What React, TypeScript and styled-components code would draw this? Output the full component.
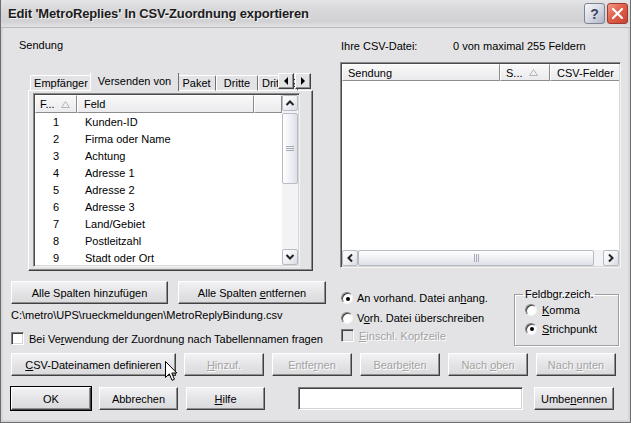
import React from 'react';
import styled, { createGlobalStyle } from 'styled-components';

const FONT = `"Liberation Sans", Arial, sans-serif`;

const GlobalStyle = createGlobalStyle`
  html, body { margin: 0; padding: 0; background: #e3e3e5; }
  body { font-family: ${FONT}; font-size: 11px; color: #000; }
  * { box-sizing: border-box; }
`;

const Window = styled.div`
  position: relative;
  width: 631px;
  height: 423px;
  display: flex;
  flex-direction: column;
  background: #d6d6d8;
  border: 1px solid #6d6d70;
  border-top: none;
  overflow: hidden;
`;

const TitleBar = styled.div`
  height: 28px;
  flex: none;
  display: flex;
  align-items: center;
  padding: 0 2px 0 7px;
  background: linear-gradient(#e4e4e6 0%, #d8d8da 35%, #d2d2d4 80%, #e2e2e4 100%);
  border-bottom: 1px solid #b8b8ba;
`;

const Title = styled.div`
  flex: 1;
  font-family: ${FONT};
  font-weight: bold;
  font-size: 13px;
  letter-spacing: -0.15px;
  color: #1c1c1c;
  text-shadow: 1px 1px 0 #f4f4f4;
  white-space: nowrap;
`;

const CaptionButtons = styled.div`
  display: flex;
  gap: 2px;
`;

const CaptionBtn = styled.div<{ $kind: 'help' | 'close' }>`
  width: 21px;
  height: 21px;
  border-radius: 3px;
  display: flex;
  align-items: center;
  justify-content: center;
  border: 1px solid ${p => (p.$kind === 'close' ? '#9a3a30' : '#7e8494')};
  background: ${p =>
    p.$kind === 'close'
      ? 'linear-gradient(135deg, #f29a88 0%, #e0604c 45%, #c8432f 100%)'
      : 'linear-gradient(135deg, #f6f7fa 0%, #d4d8e2 55%, #aeb4c4 100%)'};
  color: #3b4660;
  font-weight: bold;
  font-size: 14px;
  font-family: ${FONT};
`;

const Client = styled.div`
  flex: 1;
  margin: 0 2px 2px;
  background: #e3e3e5;
  padding: 0 0 0 8px;
  display: flex;
  flex-direction: column;
`;

const TopSection = styled.div`
  display: flex;
  align-items: flex-start;
`;

const LeftCol = styled.div`
  width: 322px;
  display: flex;
  flex-direction: column;
`;

const RightCol = styled.div`
  width: 281px;
  margin-left: 7px;
  display: flex;
  flex-direction: column;
`;

const SectionLabel = styled.div`
  margin: 10px 0 0 8px;
  line-height: 14px;
`;

const TabControl = styled.div`
  margin: 21px 0 0 17px;
  width: 285px;
  display: flex;
  flex-direction: column;
`;

const TabStrip = styled.div`
  position: relative;
  height: 18px;
  display: flex;
  align-items: flex-end;
  padding-left: 2px;
  overflow: hidden;
  z-index: 1;
  margin-bottom: -1px;
`;

const Tab = styled.div<{ $w: number; $active?: boolean; $clipped?: boolean }>`
  flex: none;
  width: ${p => p.$w + (p.$active ? 4 : 0)}px;
  height: ${p => (p.$active ? 19 : 16)}px;
  margin: 0 ${p => (p.$active ? -2 : 0)}px;
  position: relative;
  z-index: ${p => (p.$active ? 2 : 1)};
  display: flex;
  align-items: center;
  justify-content: ${p => (p.$clipped ? 'flex-start' : 'center')};
  padding-left: ${p => (p.$clipped ? 3 : 0)}px;
  line-height: 14px;
  padding-bottom: ${p => (p.$active ? 3 : 0)}px;
  background: #e3e3e5;
  border-top: 1px solid #ffffff;
  border-left: 1px solid #ffffff;
  border-right: 1px solid #707070;
  border-bottom: ${p => (p.$active ? 'none' : '1px solid #ffffff')};
  border-radius: 2px 2px 0 0;
  white-space: nowrap;
  overflow: hidden;
`;

const TabArrows = styled.div`
  position: absolute;
  right: 2px;
  top: 0;
  display: flex;
  gap: 1px;
  z-index: 3;
`;

const TabArrow = styled.div`
  width: 16px;
  height: 16px;
  display: flex;
  align-items: center;
  justify-content: center;
  background: #e3e3e5;
  border: 1px solid;
  border-color: #ffffff #404040 #404040 #ffffff;
  box-shadow: inset -1px -1px 0 #909090;
`;

const TabPanel = styled.div`
  height: 181px;
  background: #e3e3e5;
  border: 1px solid;
  border-color: #ffffff #404040 #404040 #ffffff;
  box-shadow: inset -1px -1px 0 #8c8c8c;
  padding: 2px 0 0 4px;
`;

const ListBox = styled.div<{ $w: number; $h: number }>`
  width: ${p => p.$w}px;
  height: ${p => p.$h}px;
  background: #ffffff;
  border: 1px solid;
  border-color: #8a8a8a #f4f4f4 #f4f4f4 #8a8a8a;
  box-shadow: inset 1px 1px 0 #4a4a4a, inset -1px -1px 0 #d6d6d6;
  padding: 1px;
  display: flex;
  overflow: hidden;
`;

const ListMain = styled.div`
  flex: 1;
  display: flex;
  flex-direction: column;
  overflow: hidden;
`;

const HeaderRow = styled.div<{ $h: number }>`
  display: flex;
  height: ${p => p.$h}px;
  flex: none;
`;

const HeaderCell = styled.div<{ $w: number; $pad?: number }>`
  width: ${p => p.$w}px;
  flex: none;
  display: flex;
  align-items: center;
  gap: 6px;
  padding-left: ${p => p.$pad ?? 5}px;
  background: linear-gradient(#f8f8f9, #ebebed);
  border-top: 1px solid #ffffff;
  border-left: 1px solid #ffffff;
  border-right: 1px solid #8c8c8c;
  border-bottom: 1px solid #8c8c8c;
  line-height: 14px;
  white-space: nowrap;
  overflow: hidden;
`;

const DataRow = styled.div`
  display: flex;
  height: 17px;
  flex: none;
  align-items: center;
  line-height: 14px;
`;

const NumCell = styled.div`
  width: 42px;
  text-align: center;
`;

const FieldCell = styled.div`
  padding-left: 8px;
`;

const VScroll = styled.div`
  width: 16px;
  flex: none;
  display: flex;
  flex-direction: column;
  background: #f3f3f5;
`;

const HScroll = styled.div`
  height: 16px;
  flex: none;
  display: flex;
  background: #f3f3f5;
  margin-top: auto;
`;

const SBtn = styled.div`
  width: 16px;
  height: 16px;
  flex: none;
  border: 1px solid #b9bbc4;
  border-radius: 2px;
  background: linear-gradient(135deg, #ffffff 0%, #eef0f4 55%, #d8dbe2 100%);
  display: flex;
  align-items: center;
  justify-content: center;
`;

const Thumb = styled.div<{ $vertical?: boolean; $len: number }>`
  ${p => (p.$vertical ? `height: ${p.$len}px; margin-top: 2px;` : `width: ${p.$len}px;`)}
  flex: none;
  border: 1px solid #b9bbc4;
  border-radius: 2px;
  background: ${p =>
    p.$vertical
      ? 'linear-gradient(90deg, #ffffff, #eceef2 60%, #dcdfe6)'
      : 'linear-gradient(#ffffff, #eceef2 60%, #dcdfe6)'};
  display: flex;
  align-items: center;
  justify-content: center;
`;

const Spacer = styled.div`
  flex: 1;
`;

const TopButtons = styled.div`
  margin-top: 10px;
  display: flex;
  gap: 10px;
`;

const Btn = styled.button<{ $w: number; $default?: boolean }>`
  width: ${p => p.$w}px;
  height: 23px;
  flex: none;
  padding: 0;
  font-family: ${FONT};
  font-size: 11px;
  color: #000;
  background: linear-gradient(#f2f2f4, #e3e3e5 55%, #dadadc);
  border: 1px solid;
  border-color: #ffffff #404040 #404040 #ffffff;
  box-shadow: inset -1px -1px 0 #8e8e8e;
  outline: ${p => (p.$default ? '1px solid #000' : 'none')};
  outline-offset: 0;
  cursor: default;
  &:disabled {
    color: #a2a2a2;
    text-shadow: 1px 1px 0 #ffffff;
  }
`;

const PathText = styled.div`
  margin-top: 4px;
  line-height: 14px;
  white-space: nowrap;
`;

const CheckRow = styled.div<{ $disabled?: boolean }>`
  display: flex;
  align-items: center;
  height: 15px;
  gap: 5px;
  color: ${p => (p.$disabled ? '#a2a2a2' : '#000')};
  text-shadow: ${p => (p.$disabled ? '1px 1px 0 #fff' : 'none')};
  white-space: nowrap;
`;

const LeftCheckRow = styled(CheckRow)`
  margin-top: 9px;
`;

const CheckBox = styled.span<{ $disabled?: boolean }>`
  width: 13px;
  height: 13px;
  flex: none;
  background: ${p => (p.$disabled ? '#e3e3e5' : '#ffffff')};
  border: 1px solid;
  border-color: #808080 #ffffff #ffffff #808080;
  box-shadow: inset 1px 1px 0 #404040, inset -1px -1px 0 #d4d4d4;
`;

const Radio = styled.span<{ $on?: boolean }>`
  width: 12px;
  height: 12px;
  flex: none;
  border-radius: 50%;
  background: #ffffff;
  border: 1px solid;
  border-color: #808080 #f4f4f4 #f4f4f4 #808080;
  box-shadow: inset 1px 1px 0 #404040;
  display: flex;
  align-items: center;
  justify-content: center;
  &::after {
    content: '';
    display: ${p => (p.$on ? 'block' : 'none')};
    width: 4px;
    height: 4px;
    border-radius: 50%;
    background: #000;
    margin: 1px 0 0 1px;
  }
`;

const OptionRow = styled.div`
  display: flex;
  align-items: center;
  gap: 4px;
  height: 20px;
  white-space: nowrap;
`;

const CsvInfo = styled.div`
  margin-top: 11px;
  display: flex;
  line-height: 14px;
  padding-left: 1px;
`;

const CsvLabel = styled.span`
  width: 112px;
`;

const RightListWrap = styled.div`
  margin-top: 9px;
`;

const Options = styled.div`
  margin-top: 20px;
  display: flex;
  align-items: flex-start;
`;

const RadioCol = styled.div`
  width: 174px;
  display: flex;
  flex-direction: column;
  padding-left: 1px;
`;

const GroupBox = styled.fieldset`
  margin: 0;
  width: 105px;
  height: 58px;
  padding: 0 0 0 10px;
  border: 1px solid #a0a0a0;
  box-shadow: 1px 1px 0 #ffffff, inset 1px 1px 0 #ffffff;
  display: flex;
  flex-direction: column;
`;

const Legend = styled.legend`
  padding: 0 2px;
  margin-left: -2px;
  line-height: 12px;
`;

const GroupRow = styled(OptionRow)`
  height: 19px;
  gap: 5px;
`;

const ActionRow = styled.div`
  margin-top: 7px;
  display: flex;
  gap: 8px;
`;

const BottomRow = styled.div`
  margin-top: 11px;
  display: flex;
  gap: 8px;
`;

const TextInput = styled.div`
  width: 225px;
  height: 23px;
  margin-left: 25px;
  background: #ffffff;
  border: 1px solid;
  border-color: #808080 #ffffff #ffffff #808080;
  box-shadow: inset 1px 1px 0 #404040, inset -1px -1px 0 #d4d4d4;
`;

const RenameBtn = styled(Btn)`
  margin-left: 3px;
`;

const U = styled.span`
  text-decoration: underline;
  text-underline-offset: 1px;
`;

const Cursor = styled.svg`
  position: absolute;
  left: 164px;
  top: 361px;
  z-index: 10;
`;

const Chevron: React.FC<{ dir: 'up' | 'down' | 'left' | 'right' }> = ({ dir }) => {
  const rot = { up: 0, down: 180, left: -90, right: 90 }[dir];
  return (
    <svg width="10" height="10" viewBox="0 0 10 10" style={{ transform: `rotate(${rot}deg)` }}>
      <polyline points="1.5,7 5,3.5 8.5,7" fill="none" stroke="#222" strokeWidth="2" />
    </svg>
  );
};

const Tri: React.FC<{ dir: 'left' | 'right' }> = ({ dir }) => (
  <svg width="6" height="8" viewBox="0 0 6 8">
    {dir === 'left' ? <polygon points="5,0 5,8 1,4" fill="#000" /> : <polygon points="1,0 1,8 5,4" fill="#000" />}
  </svg>
);

const SortArrow: React.FC = () => (
  <svg width="9" height="7" viewBox="0 0 9 7">
    <polygon points="4.5,0.5 8.5,6.5 0.5,6.5" fill="none" stroke="#b4b4b4" strokeWidth="1" />
  </svg>
);

const Grip: React.FC<{ vertical?: boolean }> = ({ vertical }) =>
  vertical ? (
    <svg width="8" height="7" viewBox="0 0 8 7">
      <path d="M0 1.5H8M0 3.5H8M0 5.5H8" stroke="#a8abb6" strokeWidth="1" />
    </svg>
  ) : (
    <svg width="7" height="8" viewBox="0 0 7 8">
      <path d="M1.5 0V8M3.5 0V8M5.5 0V8" stroke="#a8abb6" strokeWidth="1" />
    </svg>
  );

const rows: [number, string][] = [
  [1, 'Kunden-ID'],
  [2, 'Firma oder Name'],
  [3, 'Achtung'],
  [4, 'Adresse 1'],
  [5, 'Adresse 2'],
  [6, 'Adresse 3'],
  [7, 'Land/Gebiet'],
  [8, 'Postleitzahl'],
  [9, 'Stadt oder Ort'],
];

export default function App() {
  return (
    <>
      <GlobalStyle />
      <Window>
        <TitleBar>
          <Title>Edit 'MetroReplies' In CSV-Zuordnung exportieren</Title>
          <CaptionButtons>
            <CaptionBtn $kind="help">?</CaptionBtn>
            <CaptionBtn $kind="close">
              <svg width="13" height="13" viewBox="0 0 13 13">
                <path d="M2 2L11 11M11 2L2 11" stroke="#fff" strokeWidth="2.2" strokeLinecap="round" />
              </svg>
            </CaptionBtn>
          </CaptionButtons>
        </TitleBar>
        <Client>
          <TopSection>
            <LeftCol>
              <SectionLabel>Sendung</SectionLabel>
              <TabControl>
                <TabStrip>
                  <Tab $w={62}>Empfänger</Tab>
                  <Tab $w={85} $active>Versenden von</Tab>
                  <Tab $w={39}>Paket</Tab>
                  <Tab $w={42}>Dritte</Tab>
                  <Tab $w={40} $clipped>Dritte 2</Tab>
                  <TabArrows>
                    <TabArrow><Tri dir="left" /></TabArrow>
                    <TabArrow><Tri dir="right" /></TabArrow>
                  </TabArrows>
                </TabStrip>
                <TabPanel>
                  <ListBox $w={267} $h={174}>
                    <ListMain>
                      <HeaderRow $h={18}>
                        <HeaderCell $w={42} $pad={4}>F... <SortArrow /></HeaderCell>
                        <HeaderCell $w={177} $pad={6}>Feld</HeaderCell>
                        <HeaderCell $w={28} />
                      </HeaderRow>
                      {rows.map(([n, f]) => (
                        <DataRow key={n}>
                          <NumCell>{n}</NumCell>
                          <FieldCell>{f}</FieldCell>
                        </DataRow>
                      ))}
                    </ListMain>
                    <VScroll>
                      <SBtn><Chevron dir="up" /></SBtn>
                      <Thumb $vertical $len={71}><Grip vertical /></Thumb>
                      <Spacer />
                      <SBtn><Chevron dir="down" /></SBtn>
                    </VScroll>
                  </ListBox>
                </TabPanel>
              </TabControl>
              <TopButtons>
                <Btn $w={157}>Alle Spalten hinzufügen</Btn>
                <Btn $w={148}>Alle Spalten <U>e</U>ntfernen</Btn>
              </TopButtons>
              <PathText>C:\metro\UPS\rueckmeldungen\MetroReplyBindung.csv</PathText>
              <LeftCheckRow>
                <CheckBox />
                <span>Bei Ve<U>r</U>wendung der Zuordnung nach Tabellennamen fragen</span>
              </LeftCheckRow>
            </LeftCol>
            <RightCol>
              <CsvInfo>
                <CsvLabel>Ihre CSV-Datei:</CsvLabel>
                <span>0 von maximal 255 Feldern</span>
              </CsvInfo>
              <RightListWrap>
                <ListBox $w={281} $h={206}>
                  <ListMain>
                    <HeaderRow $h={17}>
                      <HeaderCell $w={158} $pad={5}>Sendung</HeaderCell>
                      <HeaderCell $w={50} $pad={5}>S... <SortArrow /></HeaderCell>
                      <HeaderCell $w={71} $pad={6}>CSV-Felder</HeaderCell>
                    </HeaderRow>
                    <HScroll>
                      <SBtn><Chevron dir="left" /></SBtn>
                      <Thumb $len={236}><Grip /></Thumb>
                      <Spacer />
                      <SBtn><Chevron dir="right" /></SBtn>
                    </HScroll>
                  </ListMain>
                </ListBox>
              </RightListWrap>
              <Options>
                <RadioCol>
                  <OptionRow>
                    <Radio $on />
                    <span>An vorhand. Datei an<U>h</U>ang.</span>
                  </OptionRow>
                  <OptionRow>
                    <Radio />
                    <span>V<U>o</U>rh. Datei überschreiben</span>
                  </OptionRow>
                  <CheckRow $disabled>
                    <CheckBox $disabled />
                    <span><U>E</U>inschl. Kopfzeile</span>
                  </CheckRow>
                </RadioCol>
                <GroupBox>
                  <Legend>Feldbgr.zeich.</Legend>
                  <GroupRow>
                    <Radio />
                    <span><U>K</U>omma</span>
                  </GroupRow>
                  <GroupRow>
                    <Radio $on />
                    <span><U>S</U>trichpunkt</span>
                  </GroupRow>
                </GroupBox>
              </Options>
            </RightCol>
          </TopSection>
          <ActionRow>
            <Btn $w={165}><U>C</U>SV-Dateinamen definieren</Btn>
            <Btn $w={80} disabled><U>H</U>inzuf.</Btn>
            <Btn $w={80} disabled>Entfe<U>r</U>nen</Btn>
            <Btn $w={80} disabled>Bearb<U>e</U>iten</Btn>
            <Btn $w={80} disabled>Nach <U>o</U>ben</Btn>
            <Btn $w={80} disabled>Nach <U>u</U>nten</Btn>
          </ActionRow>
          <BottomRow>
            <Btn $w={80} $default>OK</Btn>
            <Btn $w={79}>Abbrechen</Btn>
            <Btn $w={79}><U>H</U>ilfe</Btn>
            <TextInput />
            <RenameBtn $w={80}>Umbe<U>n</U>ennen</RenameBtn>
          </BottomRow>
        </Client>
        <Cursor width="13" height="21" viewBox="0 0 13 21">
          <path d="M0.5 0.5 L0.5 16.5 L4.3 12.8 L7 19.3 L9.4 18.3 L6.8 12 L11.8 12 Z" fill="#fff" stroke="#000" strokeWidth="1" strokeLinejoin="round" />
        </Cursor>
      </Window>
    </>
  );
}
